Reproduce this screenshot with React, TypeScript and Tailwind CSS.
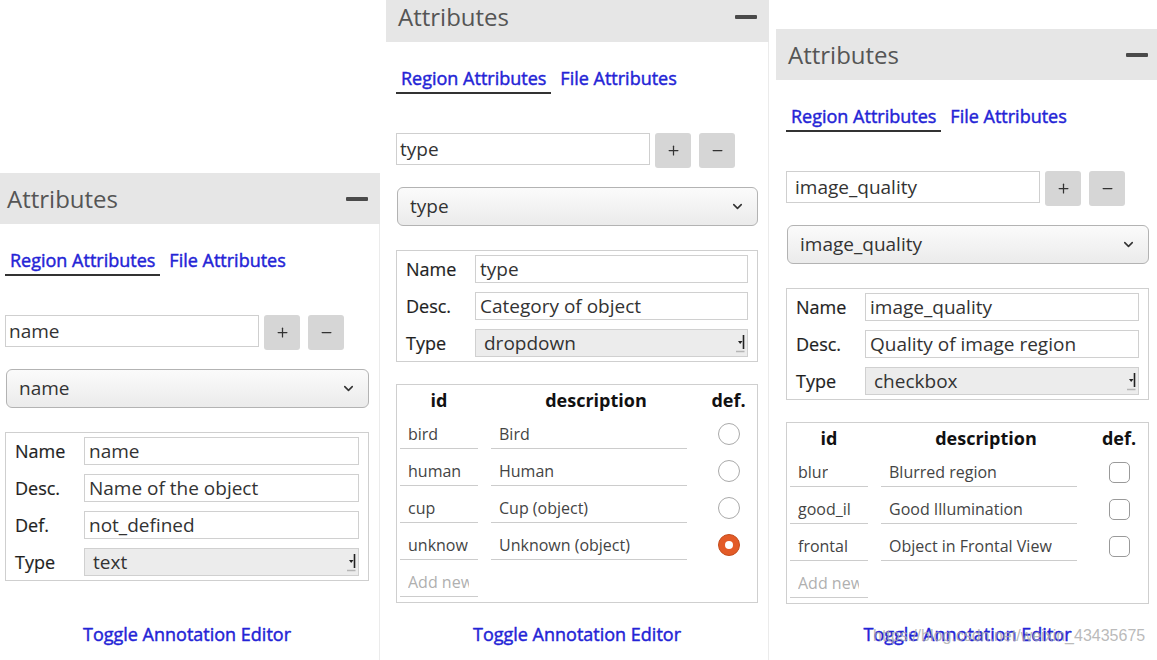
import React from 'react';
import { ChevronDown, Plus, Minus } from 'lucide-react';

type Option = { id: string; desc: string; checked?: boolean };

interface PanelData {
  width: string;
  offset: string;
  top: string;
  inputPad: string;
  attr: string;
  desc: string;
  def?: string;
  type: string;
  kind?: 'radio' | 'checkbox';
  options?: Option[];
}

const PANELS: PanelData[] = [
  {
    width: 'w-[385px]',
    offset: '-ml-[5px]',
    top: 'mt-[173px]',
    inputPad: 'pl-[3px]',
    attr: 'name',
    desc: 'Name of the object',
    def: 'not_defined',
    type: 'text',
  },
  {
    width: 'w-[383px]',
    offset: 'ml-[6px]',
    top: '-mt-[9px]',
    inputPad: 'pl-[3px]',
    attr: 'type',
    desc: 'Category of object',
    type: 'dropdown',
    kind: 'radio',
    options: [
      { id: 'bird', desc: 'Bird' },
      { id: 'human', desc: 'Human' },
      { id: 'cup', desc: 'Cup (object)' },
      { id: 'unknow', desc: 'Unknown (object)', checked: true },
    ],
  },
  {
    width: 'w-[384px]',
    offset: 'ml-[7px]',
    top: 'mt-[29px]',
    inputPad: 'pl-[8px]',
    attr: 'image_quality',
    desc: 'Quality of image region',
    type: 'checkbox',
    kind: 'checkbox',
    options: [
      { id: 'blur', desc: 'Blurred region' },
      { id: 'good_il', desc: 'Good Illumination' },
      { id: 'frontal', desc: 'Object in Frontal View' },
    ],
  },
];

// old style combo arrow used in the Type field
const ComboArrow = () => (
  <svg width="10" height="22" viewBox="0 0 10 22" className="shrink-0">
    <line x1="8.5" y1="3" x2="8.5" y2="17" stroke="#222" strokeWidth="1.6" />
    <polygon points="3,9 7.5,9 5.2,12" fill="#222" />
    <line x1="1" y1="19.5" x2="9.5" y2="19.5" stroke="#b5b5b5" strokeWidth="1.5" />
  </svg>
);

const FieldRow: React.FC<{ label: string; value: string; select?: boolean }> = ({ label, value, select }) => (
  <div className="grid grid-cols-[69px_1fr] items-center">
    <span className="text-[18px] leading-[24px] text-[#1f1f1f] [-webkit-text-stroke:0.2px_#1f1f1f]">{label}</span>
    {select ? (
      <div className="h-[28px] border border-[#d0d0d0] bg-[#ececec] flex items-center pl-[8px] pr-[2px] text-[19px] text-[#333]">
        <span className="flex-1 leading-none">{value}</span>
        <ComboArrow />
      </div>
    ) : (
      <div className="h-[28px] border border-[#d0d0d0] bg-white flex items-center px-[4px] text-[19px] text-[#333]">
        {value}
      </div>
    )}
  </div>
);

const OptionMark: React.FC<{ kind: 'radio' | 'checkbox'; checked?: boolean }> = ({ kind, checked }) => {
  if (kind === 'checkbox') {
    return <span className="w-[21px] h-[21px] rounded-[5px] border border-[#9a9a9a] bg-white" />;
  }
  if (checked) {
    return (
      <span className="w-[22px] h-[22px] rounded-full bg-[#e35b27] border border-[#c44c1c] flex items-center justify-center">
        <span className="w-[8px] h-[8px] rounded-full bg-white" />
      </span>
    );
  }
  return <span className="w-[22px] h-[22px] rounded-full border border-[#aaaaaa] bg-white" />;
};

const Cell: React.FC<{ text: string; muted?: boolean }> = ({ text, muted }) => (
  <span
    className={`h-[30px] border-b border-[#cccccc] pl-[8px] flex items-center text-[16px] ${
      muted ? 'text-[#b0b0b0]' : 'text-[#444]'
    }`}
  >
    <span className={`${muted ? 'max-w-[61px]' : 'max-w-full'} overflow-hidden whitespace-nowrap`}>{text}</span>
  </span>
);

const Panel: React.FC<{ p: PanelData }> = ({ p }) => (
  <div className={`${p.width} ${p.offset} h-[660px] shrink-0 flex flex-col`}>
    {/* header */}
    <div className={`${p.top} h-[51px] shrink-0 bg-[#e6e6e6] flex items-center justify-between pl-[12px] pr-[12px]`}>
      <span className="text-[24px] text-[#555]">Attributes</span>
      <span className="w-[22px] h-[4px] bg-[#4a4a4a] rounded-[1px]" />
    </div>

    <div className="flex-1 flex flex-col border-r border-[#ebebeb] pl-[10px] pr-[10px]">
      {/* tabs */}
      <div className="flex items-end gap-[4px] mt-[24px]">
        <span className="px-[5px] pb-[2px] border-b-2 border-[#333] text-[18px] leading-[24px] text-[#2424d6] [-webkit-text-stroke:0.45px_#2424d6]">
          Region Attributes
        </span>
        <span className="px-[5px] pb-[2px] border-b-2 border-transparent text-[18px] leading-[24px] text-[#2424d6] [-webkit-text-stroke:0.45px_#2424d6]">
          File Attributes
        </span>
      </div>

      {/* new attribute */}
      <div className="flex items-start mt-[39px]">
        <div className={`w-[254px] h-[32px] border border-[#cfcfcf] bg-white flex items-center ${p.inputPad} text-[19px] text-[#333]`}>
          {p.attr}
        </div>
        <button className="ml-[5px] w-[36px] h-[35px] rounded-[3px] bg-[#d6d6d6] flex items-center justify-center text-[#333]">
          <Plus size={15} strokeWidth={2} />
        </button>
        <button className="ml-[8px] w-[36px] h-[35px] rounded-[3px] bg-[#d6d6d6] flex items-center justify-center text-[#333]">
          <Minus size={15} strokeWidth={2} />
        </button>
      </div>

      {/* attribute select */}
      <div className="mt-[19px] ml-[1px] h-[39px] rounded-[6px] border border-[#b3b3b3] bg-gradient-to-b from-[#fbfbfb] to-[#ebebeb] flex items-center justify-between pl-[12px] pr-[12px] text-[19px] text-[#333]">
        <span>{p.attr}</span>
        <ChevronDown size={15} strokeWidth={2.5} className="text-[#333]" />
      </div>

      {/* attribute properties */}
      <div className="mt-[24px] border border-[#cfcfcf] pt-[4px] pb-[4px] pl-[9px] pr-[9px] flex flex-col gap-[9px]">
        <FieldRow label="Name" value={p.attr} />
        <FieldRow label="Desc." value={p.desc} />
        {p.def && <FieldRow label="Def." value={p.def} />}
        <FieldRow label="Type" value={p.type} select />
      </div>

      {/* options table */}
      {p.kind && p.options && (
        <div className="mt-[22px] border border-[#cfcfcf] pl-[3px] pb-[5px]">
          <div className="grid grid-cols-[78px_196px_1fr] gap-x-[13px] h-[30px] items-center text-[18px] font-bold text-[#111]">
            <span className="text-center">id</span>
            <span className="text-center pl-[14px]">description</span>
            <span className="text-center">def.</span>
          </div>
          <div className="flex flex-col gap-[7px] pt-[4px]">
            {p.options.map((o) => (
              <div key={o.id} className="grid grid-cols-[78px_196px_1fr] gap-x-[13px] h-[30px] items-center">
                <Cell text={o.id} />
                <Cell text={o.desc} />
                <span className="flex justify-center">
                  <OptionMark kind={p.kind!} checked={o.checked} />
                </span>
              </div>
            ))}
            <div className="grid grid-cols-[78px_196px_1fr] gap-x-[13px] h-[30px] items-center">
              <Cell text="Add new" muted />
            </div>
          </div>
        </div>
      )}

      <div className="mt-auto pb-[14px] text-center text-[18px] leading-[24px] text-[#2424d6] [-webkit-text-stroke:0.45px_#2424d6]">
        Toggle Annotation Editor
      </div>
    </div>
  </div>
);

export default function App() {
  return (
    <div className="relative w-[1157px] h-[660px] overflow-hidden bg-white font-['Open_Sans',sans-serif] flex">
      {PANELS.map((p) => (
        <Panel key={p.attr} p={p} />
      ))}
      <span className="absolute left-[873px] top-[624px] text-[16px] text-[#a8a8a8]/80 font-['Liberation_Sans',sans-serif] pointer-events-none">
        https://blog.csdn.net/weixin_43435675
      </span>
    </div>
  );
}
